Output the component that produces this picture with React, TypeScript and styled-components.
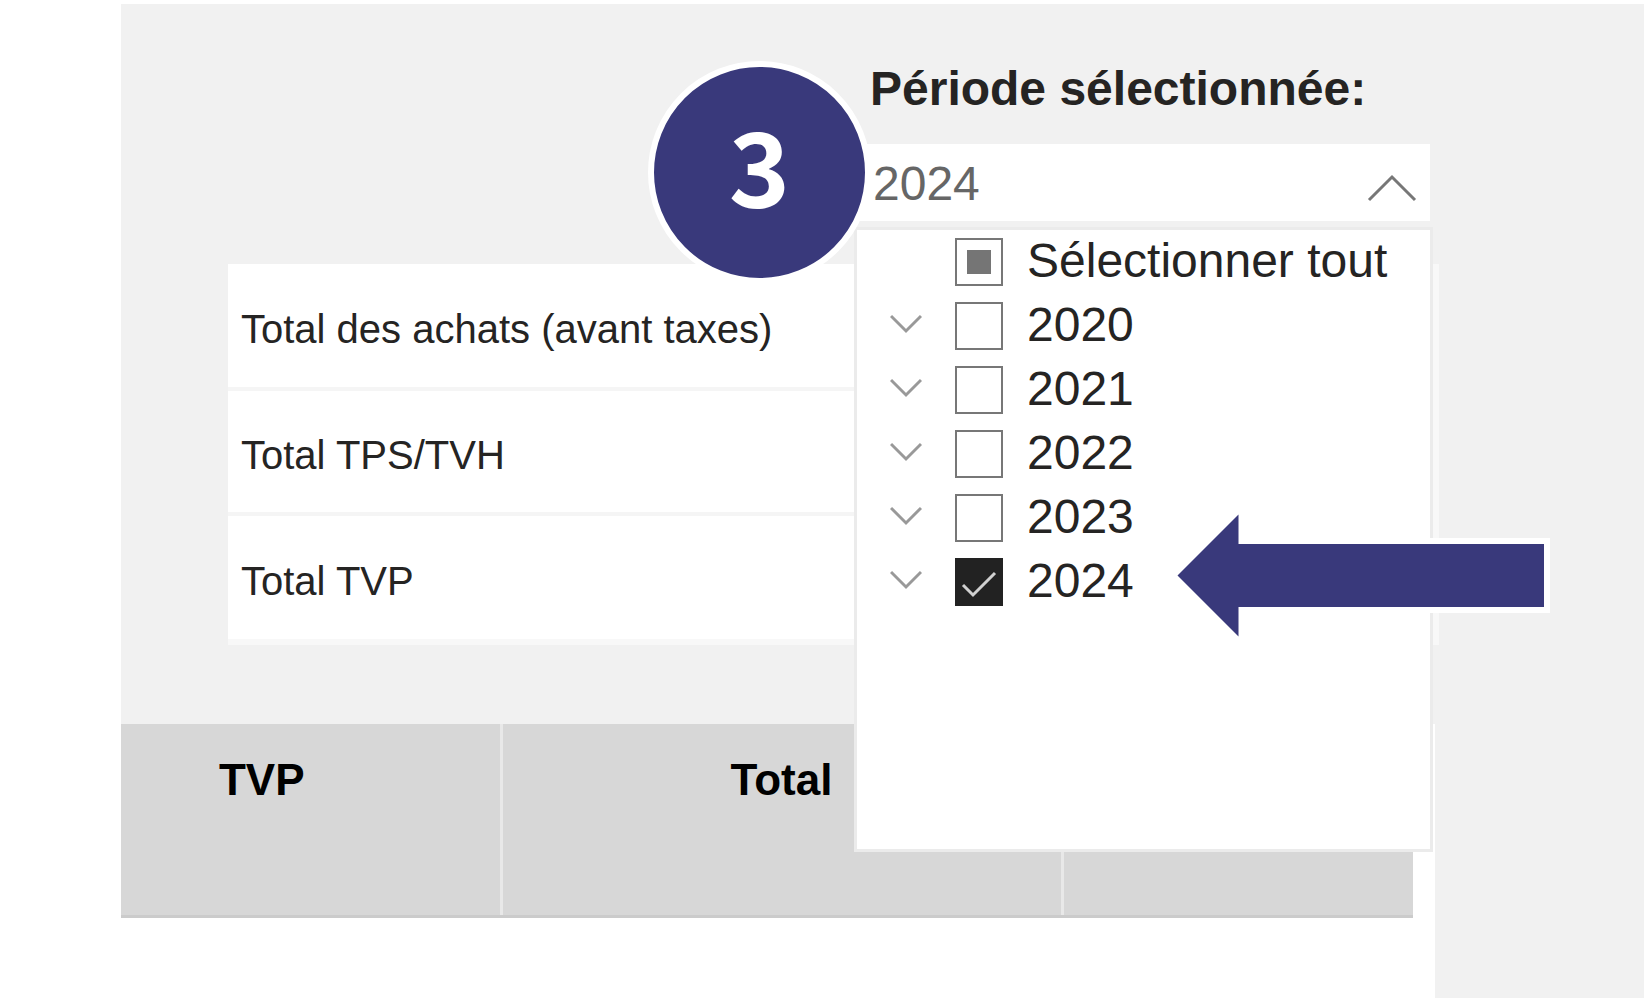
import React, { useEffect, useRef, useState } from "react";
import styled, { createGlobalStyle } from "styled-components";

const ink = "#252423";
const accent = "#39397b";

const GlobalStyle = createGlobalStyle`
  * { box-sizing: border-box; }
  body {
    margin: 0;
    background: #ffffff;
    color: ${ink};
    font-family: "Liberation Sans", Arial, sans-serif;
  }
  button { font: inherit; color: inherit; border: 0; padding: 0; background: none; cursor: pointer; }
`;

const Page = styled.div`
  padding: 4px 0 0 121px;
  overflow: hidden;
`;

const Report = styled.main`
  display: flex;
  flex-direction: column;
  min-height: calc(100vh - 4px);
  padding-top: 57px;
  background: #f1f1f1;
`;

const FilterBar = styled.section`
  display: flex;
  justify-content: flex-end;
  padding-right: 214px;
`;

const Field = styled.div`
  position: relative;
  display: flex;
  flex-direction: column;
  gap: 27px;
  width: 573px;
`;

const FieldLabel = styled.label`
  padding-left: 13px;
  font-size: 48px;
  font-weight: 700;
  line-height: 56px;
  white-space: nowrap;
`;

const Combo = styled.button`
  && {
    display: flex;
    align-items: center;
    justify-content: space-between;
    height: 77px;
    padding: 2px 13px 0 16px;
    background: #ffffff;
    color: #666666;
    font-size: 48px;
    line-height: 56px;
  }
`;

const Popup = styled.div`
  position: absolute;
  z-index: 1;
  top: calc(100% + 6px);
  left: -3px;
  right: -3px;
  height: 625px;
  border: 3px solid #ebebeb;
  background: #ffffff;
`;

const OptionList = styled.ul`
  margin: 0;
  padding: 0;
  list-style: none;
`;

const Option = styled.li`
  display: flex;
  align-items: center;
  height: 64px;
`;

const Expander = styled.div`
  display: flex;
  justify-content: center;
  width: 98px;
  padding-bottom: 4px;
`;

const OptionLabel = styled.label`
  display: flex;
  align-items: center;
  gap: 24px;
  font-size: 48px;
  line-height: 56px;
  white-space: nowrap;
`;

const OptionText = styled.span`
  padding-bottom: 2px;
`;

const TickBox = styled.span`
  position: relative;
  display: flex;
  width: 48px;
  height: 48px;

  svg {
    position: absolute;
    inset: 0;
    pointer-events: none;
  }
`;

const TickInput = styled.input`
  appearance: none;
  width: 48px;
  height: 48px;
  margin: 0;
  border: 2px solid #777777;
  background: #ffffff;

  &:checked {
    border-color: #222222;
    background: #222222;
  }

  &:indeterminate {
    border-color: #777777;
    background: linear-gradient(#757575, #757575) center / 24px 24px no-repeat #ffffff;
  }
`;

const StepBadge = styled.div`
  position: absolute;
  z-index: 2;
  top: 0;
  left: -209px;
  display: flex;
  align-items: center;
  justify-content: center;
  width: 223px;
  height: 223px;
  padding-bottom: 20px;
  border: 6px solid #ffffff;
  border-radius: 50%;
  background: ${accent};
  color: #ffffff;
  font-family: "Noto Sans CJK JP", sans-serif;
  font-size: 104px;
  font-weight: 700;
  line-height: 120px;
`;

const Pointer = styled.svg`
  position: absolute;
  z-index: 2;
  top: 278px;
  left: 314px;
`;

const SummaryWrap = styled.section`
  margin: 43px 205px 79px 107px;
  border: solid #f8f8f8;
  border-width: 0 6px 6px 0;
`;

const Summary = styled.table`
  width: 100%;
  border-collapse: collapse;
  background: #ffffff;

  tr + tr {
    border-top: 4px solid #f5f5f5;
  }
`;

const SummaryName = styled.th`
  height: 125px;
  padding: 6px 0 0 13px;
  font-size: 40px;
  font-weight: 400;
  line-height: 48px;
  text-align: left;
`;

const Detail = styled.section`
  flex: 1;
  margin-right: 209px;
  padding-right: 22px;
  overflow: hidden;
  background: #ffffff;
`;

const DetailTable = styled.table`
  width: calc(100% + 97px);
  margin-left: -97px;
  border-collapse: collapse;
  table-layout: fixed;
`;

const DetailHead = styled.th<{ $width?: number }>`
  width: ${(p) => (p.$width ? `${p.$width}px` : "auto")};
  height: 192px;
  padding: 30px 0 0;
  border-bottom: 3px solid #cbcbcb;
  background: #d7d7d7;
  color: #000000;
  font-size: 44px;
  font-weight: 700;
  line-height: 52px;
  text-align: center;
  vertical-align: top;

  & + & {
    border-left: 3px solid #e8e8e8;
  }
`;

const years = ["2020", "2021", "2022", "2023", "2024"];

function ChevronDown() {
  return (
    <svg width="32" height="20" viewBox="0 0 32 20" fill="none" stroke="#999999" strokeWidth="3" aria-hidden="true">
      <path d="M1 2 L16 17 L31 2" />
    </svg>
  );
}

function Tick({ checked, mixed, onChange }: { checked: boolean; mixed?: boolean; onChange: () => void }) {
  const ref = useRef<HTMLInputElement>(null);
  useEffect(() => {
    if (ref.current) ref.current.indeterminate = Boolean(mixed);
  }, [mixed]);
  return (
    <TickBox>
      <TickInput ref={ref} type="checkbox" checked={checked} onChange={onChange} />
      {checked && (
        <svg width="48" height="48" viewBox="0 0 48 48" fill="none" stroke="#d0d0d0" strokeWidth="3" aria-hidden="true">
          <path d="M8 27 L18 37 L40 15" />
        </svg>
      )}
    </TickBox>
  );
}

export default function App() {
  const [selected, setSelected] = useState<string[]>(["2024"]);
  const all = selected.length === years.length;
  const toggle = (year: string) =>
    setSelected((now) => (now.includes(year) ? now.filter((y) => y !== year) : [...now, year].sort()));

  return (
    <Page>
      <GlobalStyle />
      <Report>
        <FilterBar>
          <Field>
            <FieldLabel htmlFor="period">Période sélectionnée:</FieldLabel>
            <Combo id="period" type="button" aria-expanded="true" aria-controls="period-options">
              {selected.join(", ")}
              <svg width="50" height="36" viewBox="0 0 50 36" fill="none" stroke="#777777" strokeWidth="3" aria-hidden="true">
                <path d="M2 34 L25 11 L48 34" />
              </svg>
            </Combo>
            <Popup id="period-options">
              <OptionList>
                <Option>
                  <Expander />
                  <OptionLabel>
                    <Tick
                      checked={all}
                      mixed={!all && selected.length > 0}
                      onChange={() => setSelected(all ? [] : years)}
                    />
                    <OptionText>Sélectionner tout</OptionText>
                  </OptionLabel>
                </Option>
                {years.map((year) => (
                  <Option key={year}>
                    <Expander as="button" type="button" aria-label={`Développer ${year}`}>
                      <ChevronDown />
                    </Expander>
                    <OptionLabel>
                      <Tick checked={selected.includes(year)} onChange={() => toggle(year)} />
                      <OptionText>{year}</OptionText>
                    </OptionLabel>
                  </Option>
                ))}
              </OptionList>
              <Pointer width="380" height="136" viewBox="0 0 380 136" aria-hidden="true">
                <path
                  d="M6.500 67.500 L67.500 6.500 V36 H373 V99 H67.500 V128.500 Z"
                  fill={accent}
                  stroke="#ffffff"
                  strokeWidth="12"
                  paintOrder="stroke"
                />
              </Pointer>
            </Popup>
            <StepBadge>3</StepBadge>
          </Field>
        </FilterBar>

        <SummaryWrap>
          <Summary>
            <tbody>
              <tr>
                <SummaryName scope="row">Total des achats (avant taxes)</SummaryName>
              </tr>
              <tr>
                <SummaryName scope="row">Total TPS/TVH</SummaryName>
              </tr>
              <tr>
                <SummaryName scope="row">Total TVP</SummaryName>
              </tr>
            </tbody>
          </Summary>
        </SummaryWrap>

        <Detail>
          <DetailTable>
            <thead>
              <tr>
                <DetailHead scope="col" $width={477}>TVP</DetailHead>
                <DetailHead scope="col" $width={561}>Total</DetailHead>
                <DetailHead scope="col" />
              </tr>
            </thead>
          </DetailTable>
        </Detail>
      </Report>
    </Page>
  );
}
